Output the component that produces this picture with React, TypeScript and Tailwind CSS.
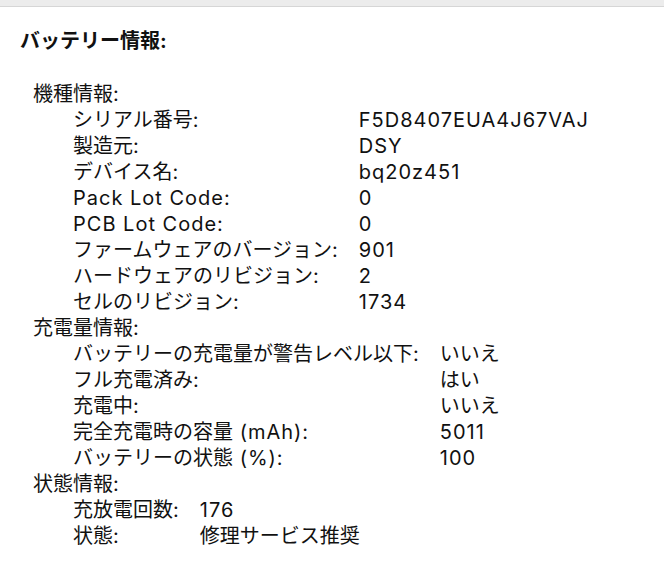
type Row = [string, string];

interface Group {
  title: string;
  rows: Row[];
}

const groups: Group[] = [
  {
    title: "機種情報:",
    rows: [
      ["シリアル番号:", "F5D8407EUA4J67VAJ"],
      ["製造元:", "DSY"],
      ["デバイス名:", "bq20z451"],
      ["Pack Lot Code:", "0"],
      ["PCB Lot Code:", "0"],
      ["ファームウェアのバージョン:", "901"],
      ["ハードウェアのリビジョン:", "2"],
      ["セルのリビジョン:", "1734"],
    ],
  },
  {
    title: "充電量情報:",
    rows: [
      ["バッテリーの充電量が警告レベル以下:", "いいえ"],
      ["フル充電済み:", "はい"],
      ["充電中:", "いいえ"],
      ["完全充電時の容量 (mAh):", "5011"],
      ["バッテリーの状態 (%):", "100"],
    ],
  },
  {
    title: "状態情報:",
    rows: [
      ["充放電回数:", "176"],
      ["状態:", "修理サービス推奨"],
    ],
  },
];

// latin runs are a bit wider in the original, so space them out
function Txt({ text }: { text: string }) {
  const parts = text.split(/([\x20-\x7e]+)/).filter((p) => p !== "");
  return (
    <>
      {parts.map((p, i) =>
        /^[\x20-\x7e]+$/.test(p) ? (
          <span key={i} className="tracking-[1px]">
            {p}
          </span>
        ) : (
          <span key={i}>{p}</span>
        )
      )}
    </>
  );
}

function Section({ group }: { group: Group }) {
  return (
    <div>
      <div className="pl-[33px]">
        <Txt text={group.title} />
      </div>
      <div className="grid grid-cols-[auto_1fr] gap-x-[20px] pl-[73px]">
        {group.rows.map(([label, value]) => (
          <div key={label} className="contents">
            <div>
              <Txt text={label} />
            </div>
            <div>
              <Txt text={value} />
            </div>
          </div>
        ))}
      </div>
    </div>
  );
}

export default function App() {
  return (
    <div
      className="w-[664px] h-[570px] bg-white text-[#111] overflow-hidden"
      style={{ fontFamily: '"Inter", "Noto Sans CJK JP", sans-serif' }}
    >
      <div className="h-[7px] bg-[#ececec] border-b border-[#d6d6d6]" />
      <div className="pt-[21px] text-[20px] leading-[26px]">
        <div className="pl-[20px] font-bold">
          <Txt text="バッテリー情報:" />
        </div>
        <div className="mt-[27px]">
          {groups.map((g) => (
            <Section key={g.title} group={g} />
          ))}
        </div>
      </div>
    </div>
  );
}
